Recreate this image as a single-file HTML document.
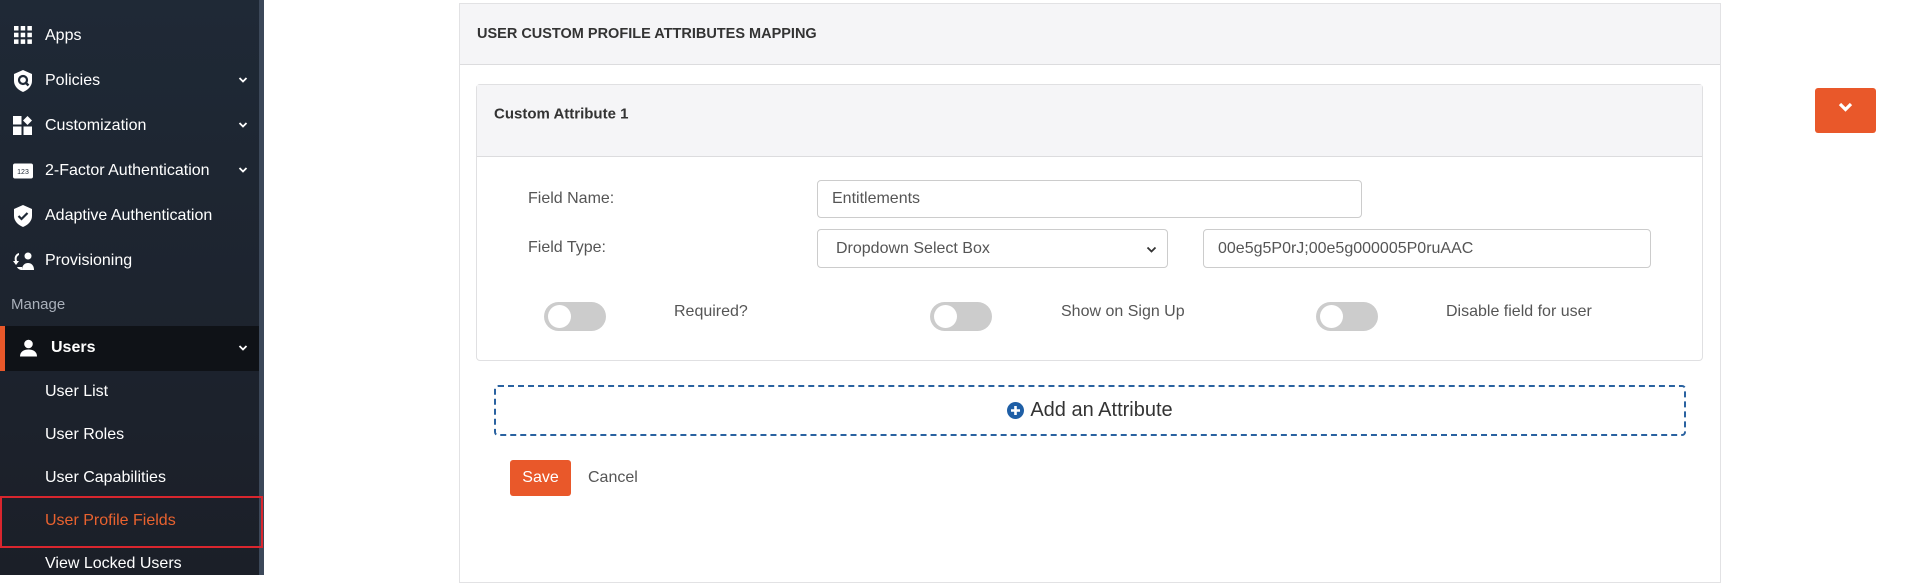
<!DOCTYPE html>
<html><head><meta charset="utf-8"><style>
*{box-sizing:border-box;margin:0;padding:0}
body{width:1906px;height:575px;overflow:hidden;background:#fff;font-family:"Liberation Sans",sans-serif;position:relative}
.sb{position:absolute;left:0;top:0;width:259px;height:575px;background:linear-gradient(#1f2936,#1b1f28)}
.stripe{position:absolute;left:259px;top:0;width:5px;height:575px;background:#3c4859}
.it{position:absolute;left:45px;color:#fff;font-size:16px;line-height:20px;transform:translateY(-50%);white-space:nowrap}
.ic{position:absolute;left:13px;transform:translateY(-50%)}
.chev{position:absolute;left:238px;transform:translateY(-50%)}
.ab{position:absolute}
.lbl{position:absolute;font-size:16px;color:#555;transform:translateY(-50%);white-space:nowrap}
.inp{position:absolute;border:1px solid #ccc;border-radius:4px;background:#fff;font-size:16px;color:#555;padding-left:14px;display:flex;align-items:center}
.tog{position:absolute;width:62px;height:29px;border-radius:15px;background:#ccc}
.tog:after{content:"";position:absolute;left:4px;top:3px;width:23px;height:23px;border-radius:50%;background:#fff}
</style></head><body>
<div class="sb"></div><div class="stripe"></div>
<svg class="ic" style="top:35px;left:14px" width="18" height="18" viewBox="0 0 18 18" fill="#fff"><rect x="0" y="0" width="4.5" height="4.5"/><rect x="6.7" y="0" width="4.5" height="4.5"/><rect x="13.4" y="0" width="4.5" height="4.5"/><rect x="0" y="6.7" width="4.5" height="4.5"/><rect x="6.7" y="6.7" width="4.5" height="4.5"/><rect x="13.4" y="6.7" width="4.5" height="4.5"/><rect x="0" y="13.4" width="4.5" height="4.5"/><rect x="6.7" y="13.4" width="4.5" height="4.5"/><rect x="13.4" y="13.4" width="4.5" height="4.5"/></svg>
<div class="it" style="top:36px">Apps</div>
<svg class="ic" style="top:81px" width="20" height="22" viewBox="0 0 20 22"><path d="M10 0L19 4v7c0 5-4 9-9 11C5 20 1 16 1 11V4z" fill="#fff"/><circle cx="10" cy="10" r="4" fill="none" stroke="#1f2936" stroke-width="2.2"/><path d="M12.5 12.5l3 3" stroke="#1f2936" stroke-width="2.4"/></svg>
<div class="it" style="top:81px">Policies</div>
<svg class="chev" style="top:80px" width="10" height="7" viewBox="0 0 10 7"><path d="M1.5 1.5l3.5 3.5 3.5-3.5" fill="none" stroke="#fff" stroke-width="1.8"/></svg>
<svg class="ic" style="top:126px" width="20" height="20" viewBox="0 0 20 20" fill="#fff"><rect x="0" y="0" width="8.5" height="8.5"/><rect x="0" y="10.5" width="8.5" height="8.5"/><rect x="10.5" y="10.5" width="8.5" height="8.5"/><path d="M14.5 0l4.5 4.5-4.5 4.5-4.5-4.5z"/></svg>
<div class="it" style="top:126px">Customization</div>
<svg class="chev" style="top:125px" width="10" height="7" viewBox="0 0 10 7"><path d="M1.5 1.5l3.5 3.5 3.5-3.5" fill="none" stroke="#fff" stroke-width="1.8"/></svg>
<svg class="ic" style="top:171px" width="20" height="15" viewBox="0 0 20 15"><rect width="20" height="15" rx="2" fill="#fff"/><text x="10" y="10.5" font-size="7" text-anchor="middle" fill="#1f2936" font-family="Liberation Sans">123</text></svg>
<div class="it" style="top:171px">2-Factor Authentication</div>
<svg class="chev" style="top:170px" width="10" height="7" viewBox="0 0 10 7"><path d="M1.5 1.5l3.5 3.5 3.5-3.5" fill="none" stroke="#fff" stroke-width="1.8"/></svg>
<svg class="ic" style="top:216px" width="20" height="22" viewBox="0 0 20 22"><path d="M10 0L19 4v7c0 5-4 9-9 11C5 20 1 16 1 11V4z" fill="#fff"/><path d="M5.5 11l3 3 6-6" fill="none" stroke="#1f2936" stroke-width="2.2"/></svg>
<div class="it" style="top:216px">Adaptive Authentication</div>
<svg class="ic" style="top:261px" width="22" height="20" viewBox="0 0 22 20" fill="#fff"><path d="M6 2C2 3 1 7 2 10l-2 0 3 4 3-4-2 0c-1-3 0-5 2-6z"/><path d="M4 16c1 2 3 3 5 3v-3z"/><circle cx="15" cy="5" r="3.5"/><path d="M9 19c0-5 3-7 6-7s6 2 6 7z"/></svg>
<div class="it" style="top:261px">Provisioning</div>
<div class="it" style="top:305px;left:11px;color:#a9b0ba;font-size:15px">Manage</div>
<div class="ab" style="left:0;top:326px;width:259px;height:45px;background:#0f1217"></div>
<div class="ab" style="left:0;top:326px;width:5px;height:45px;background:#e9582a"></div>
<svg class="ic" style="top:348px;left:20px" width="17" height="17" viewBox="0 0 17 17" fill="#fff"><circle cx="8.5" cy="4.5" r="4.3"/><path d="M0 17c0-5 4-7 8.5-7S17 12 17 17z"/></svg>
<div class="it" style="top:348px;left:51px;font-weight:bold">Users</div>
<svg class="chev" style="top:348px" width="10" height="7" viewBox="0 0 10 7"><path d="M1.5 1.5l3.5 3.5 3.5-3.5" fill="none" stroke="#fff" stroke-width="1.8"/></svg>
<div class="it" style="top:392px">User List</div>
<div class="it" style="top:435px">User Roles</div>
<div class="it" style="top:478px">User Capabilities</div>
<div class="ab" style="left:0;top:496px;width:263px;height:52px;border:2.5px solid #d9262e"></div>
<div class="it" style="top:521px;color:#e9622f">User Profile Fields</div>
<div class="it" style="top:564px">View Locked Users</div>

<div class="ab" style="left:459px;top:3px;width:1262px;height:580px;border:1px solid #e2e2e4"></div>
<div class="ab" style="left:460px;top:4px;width:1260px;height:61px;background:#f5f5f7;border-bottom:1px solid #dcdcde"></div>
<div class="lbl" style="left:477px;top:34px;font-size:14.5px;font-weight:bold;color:#333">USER CUSTOM PROFILE ATTRIBUTES MAPPING</div>
<div class="ab" style="left:476px;top:84px;width:1227px;height:277px;border:1px solid #e0e0e2;border-radius:4px"></div>
<div class="ab" style="left:477px;top:85px;width:1225px;height:72px;background:#f5f5f7;border-bottom:1px solid #dcdcde"></div>
<div class="lbl" style="left:494px;top:114px;font-size:15px;font-weight:bold;color:#333">Custom Attribute 1</div>
<div class="lbl" style="left:528px;top:199px">Field Name:</div>
<div class="inp" style="left:817px;top:180px;width:545px;height:38px">Entitlements</div>
<div class="lbl" style="left:528px;top:248px">Field Type:</div>
<div class="inp" style="left:817px;top:229px;width:351px;height:39px;padding-left:18px">Dropdown Select Box
<svg style="position:absolute;right:10px;top:16px" width="11" height="7" viewBox="0 0 11 7"><path d="M1.5 1.5l4 4 4-4" fill="none" stroke="#333" stroke-width="1.8"/></svg></div>
<div class="inp" style="left:1203px;top:229px;width:448px;height:39px">00e5g5P0rJ;00e5g000005P0ruAAC</div>
<div class="tog" style="left:544px;top:302px"></div>
<div class="lbl" style="left:674px;top:312px">Required?</div>
<div class="tog" style="left:930px;top:302px"></div>
<div class="lbl" style="left:1061px;top:312px">Show on Sign Up</div>
<div class="tog" style="left:1316px;top:302px"></div>
<div class="lbl" style="left:1446px;top:312px">Disable field for user</div>
<div class="ab" style="left:494px;top:385px;width:1192px;height:51px;border:2px dashed #2a62a0;border-radius:4px;display:flex;align-items:center;justify-content:center;font-size:20px;color:#333">
<svg width="17" height="17" viewBox="0 0 17 17" style="margin-right:6px"><circle cx="8.5" cy="8.5" r="8.5" fill="#1f5fa6"/><path d="M8.5 4v9M4 8.5h9" stroke="#fff" stroke-width="2.6"/></svg>Add an Attribute</div>
<div class="ab" style="left:510px;top:460px;width:61px;height:36px;background:#e9582a;border-radius:3px;color:#fff;font-size:16px;display:flex;align-items:center;justify-content:center">Save</div>
<div class="lbl" style="left:588px;top:478px">Cancel</div>
<div class="ab" style="left:1815px;top:88px;width:61px;height:45px;background:#e9582a;border-radius:3px"></div>
<svg class="ab" style="left:1838px;top:102px" width="15" height="11" viewBox="0 0 15 11"><path d="M2 2l5.5 5.5L13 2" fill="none" stroke="#fff" stroke-width="3.2"/></svg>
</body></html>
